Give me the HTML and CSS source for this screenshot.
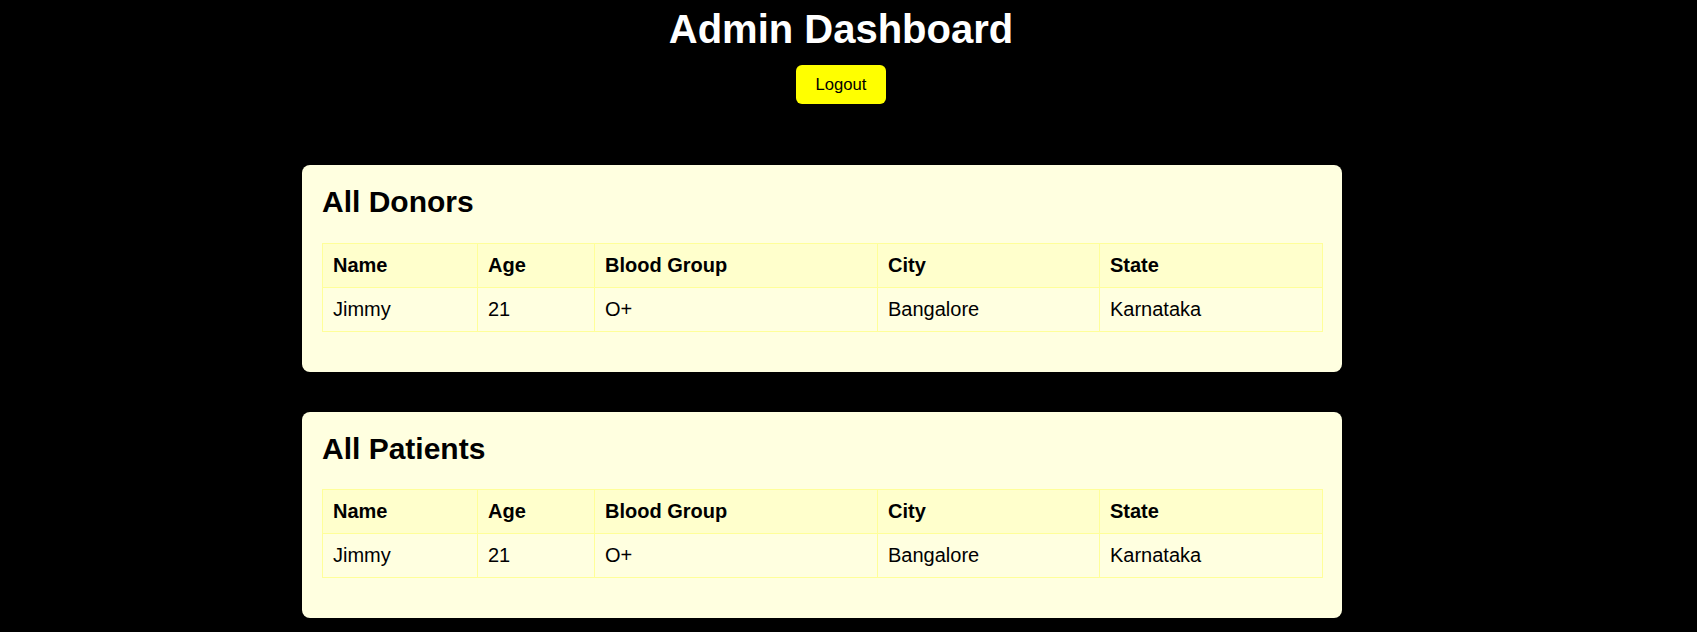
FILE: index.html
```html
<!DOCTYPE html>
<html lang="en">
<head>
<meta charset="utf-8">
<title>Admin Dashboard</title>
<link rel="stylesheet" href="styles.css">
</head>
<body>
<header class="header">
  <h1 class="title">Admin Dashboard</h1>
  <button class="logout">Logout</button>
</header>
<main class="main">
  <div class="wrap">
    <section class="card">
      <h2 class="card-title">All Donors</h2>
      <table class="data">
        <colgroup>
          <col class="c-name"><col class="c-age"><col class="c-blood"><col class="c-city"><col class="c-state">
        </colgroup>
        <thead>
          <tr><th>Name</th><th>Age</th><th>Blood Group</th><th>City</th><th>State</th></tr>
        </thead>
        <tbody>
          <tr><td>Jimmy</td><td>21</td><td>O+</td><td>Bangalore</td><td>Karnataka</td></tr>
        </tbody>
      </table>
    </section>
    <section class="card">
      <h2 class="card-title">All Patients</h2>
      <table class="data">
        <colgroup>
          <col class="c-name"><col class="c-age"><col class="c-blood"><col class="c-city"><col class="c-state">
        </colgroup>
        <thead>
          <tr><th>Name</th><th>Age</th><th>Blood Group</th><th>City</th><th>State</th></tr>
        </thead>
        <tbody>
          <tr><td>Jimmy</td><td>21</td><td>O+</td><td>Bangalore</td><td>Karnataka</td></tr>
        </tbody>
      </table>
    </section>
  </div>
</main>
</body>
</html>
```

FILE: styles.css
```css
html, body {
  margin: 0;
  padding: 0;
}
body {
  background: #000;
  font-family: "Liberation Sans", Arial, sans-serif;
  color: #000;
  padding-right: 15px;
}
.header {
  text-align: center;
  padding-top: 5.5px;
}
.title {
  margin: 0;
  font-size: 40px;
  line-height: 46px;
  font-weight: bold;
  color: #fff;
}
.logout {
  display: inline-block;
  margin-top: 13.5px;
  background: #ffff00;
  color: #000;
  border: none;
  border-radius: 6px;
  padding: 10px 20px;
  font-family: "Liberation Sans", Arial, sans-serif;
  font-size: 16.67px;
  line-height: 19px;
  cursor: pointer;
}
.main {
  padding-top: 61px;
  padding-bottom: 40px;
}
.wrap {
  width: 1078px;
  margin: 0 auto;
  display: flex;
  flex-direction: column;
  align-items: flex-start;
  gap: 40px;
}
.card {
  width: 1000px;
  padding: 20px;
  background: #ffffe0;
  border-radius: 8px;
}
.card-title {
  margin: 0 0 23px;
  font-size: 30px;
  font-weight: bold;
  line-height: 34.5px;
}
.data {
  width: 1000px;
  border-collapse: collapse;
  table-layout: fixed;
  font-size: 20px;
  margin-bottom: 20px;
}
.data th,
.data td {
  border: 1px solid #ffff99;
  padding: 10px;
  text-align: left;
  line-height: 23px;
}
.data th {
  background: #ffffcc;
  font-weight: bold;
}
.c-name { width: 155px; }
.c-age { width: 117px; }
.c-blood { width: 283px; }
.c-city { width: 222px; }
.c-state { width: 223px; }
```
